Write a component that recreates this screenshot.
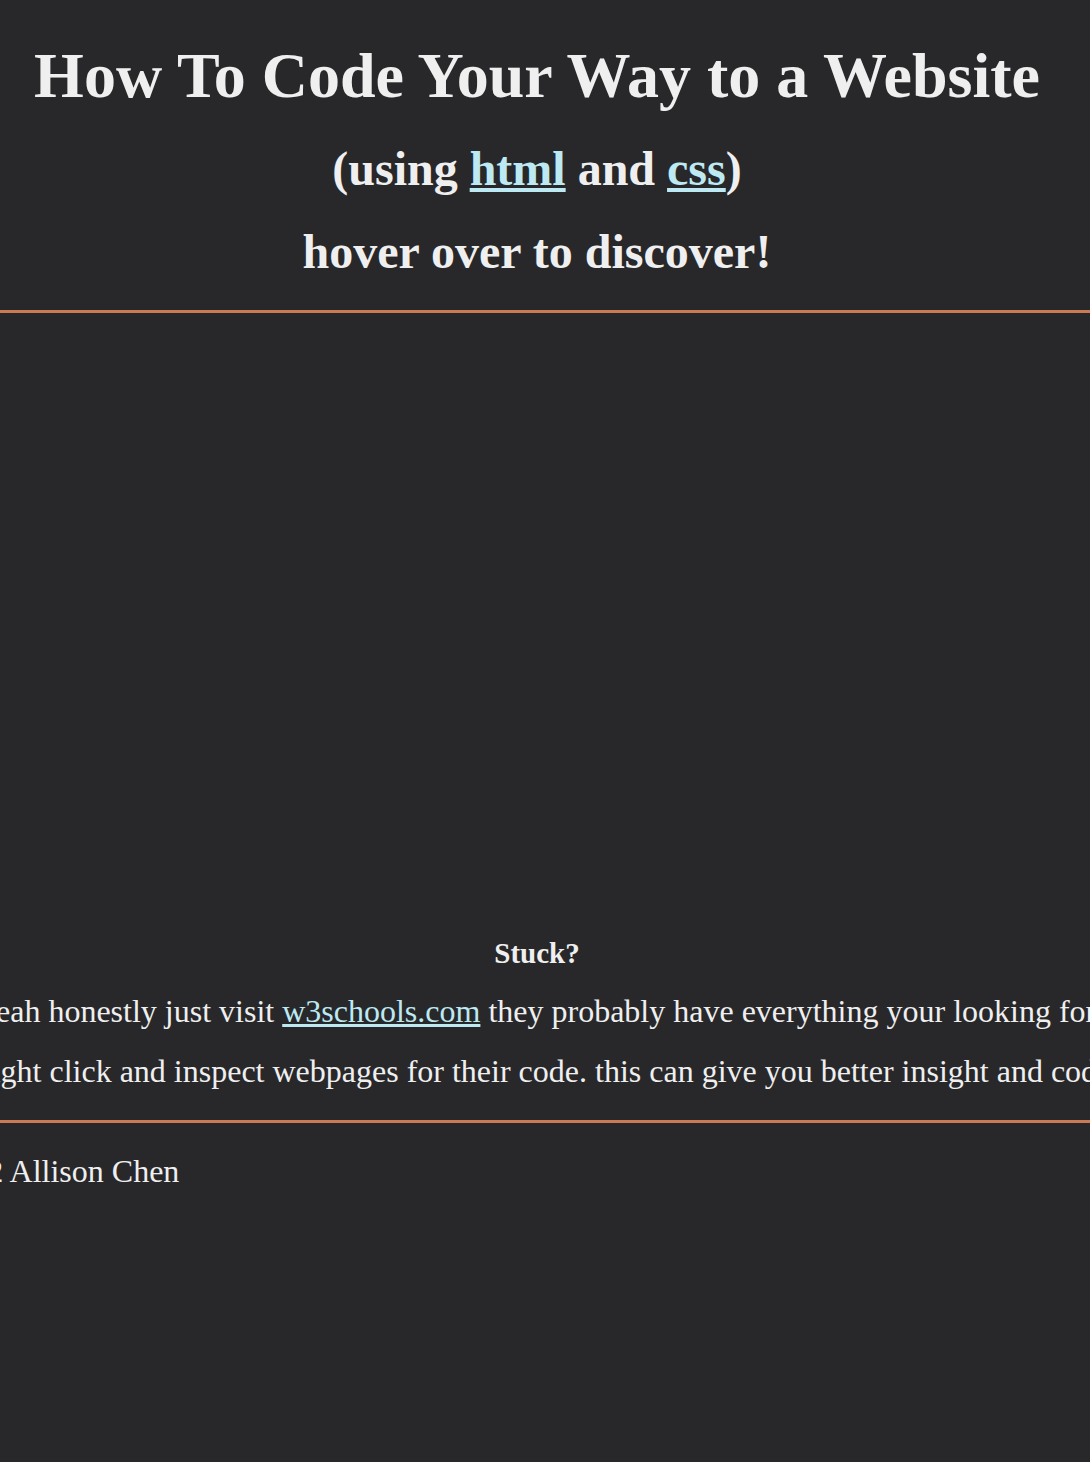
export default function App() {
  return (
    <div className="min-h-[1462px] w-full overflow-hidden bg-[#28282b] font-['Liberation_Serif','Times_New_Roman',serif] text-[#efefef]">
      <div className="w-[1074px] text-center">
        <h1 className="mt-[39px] text-[64px] font-bold leading-[74px]">How To Code Your Way to a Website</h1>
        <h2 className="mt-[28px] text-[48px] font-bold leading-[56px]">
          (using <a href="#" className="text-[#bde9f2] underline">html</a> and{" "}
          <a href="#" className="text-[#bde9f2] underline">css</a>)
        </h2>
        <h2 className="mt-[27px] text-[48px] font-bold leading-[56px]">hover over to discover!</h2>
      </div>
      <div className="mt-[30px] h-[3px] w-full bg-[#c97b53]" />
      <div className="h-[624px]" />
      <div className="w-[1074px] text-center">
        <h4 className="text-[29px] font-bold leading-[32px]">Stuck?</h4>
      </div>
      <p className="ml-[-20px] mt-[24px] whitespace-nowrap text-[32px] leading-[37px]">
        yeah honestly just visit{" "}
        <a href="#" className="text-[#bde9f2] underline">w3schools.com</a> they probably have everything your looking for
      </p>
      <p className="ml-[-19px] mt-[23px] whitespace-nowrap text-[32px] leading-[37px]">
        right click and inspect webpages for their code. this can give you better insight and code
      </p>
      <div className="mt-[30px] h-[3px] w-full bg-[#c97b53]" />
      <footer className="ml-[-93px] mt-[30px] whitespace-nowrap text-[32px] leading-[37px]">© 2022 Allison Chen</footer>
    </div>
  );
}
